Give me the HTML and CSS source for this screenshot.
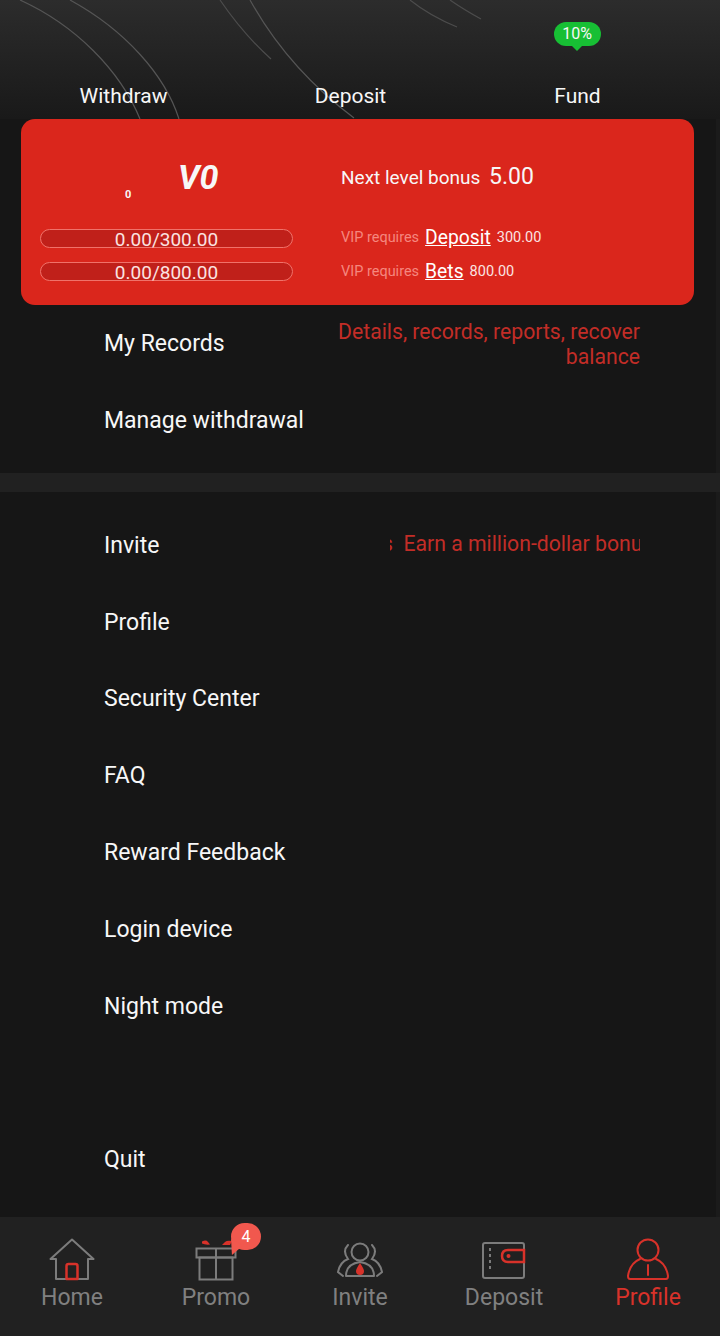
FILE: index.html
```html
<!DOCTYPE html>
<html>
  <head>
    <meta charset="utf-8">
    <title>Profile</title>
    <link rel="stylesheet" href="styles.css">
  </head>
  <body>
    <div class="page">
      <div class="top_bar">
        <svg class="top_lines" width="720" height="119" viewBox="0 0 720 119" fill="none" stroke-width="1.200">
          <path d="M20 0C75 25 120 70 140 119" stroke="#555"/>
          <path d="M70 0C125 30 165 75 179 119" stroke="#555"/>
          <path d="M220 0C235 22 252 42 271 59" stroke="#4c4c4c"/>
          <path d="M250 0C275 45 310 85 354 118" stroke="#555"/>
          <path d="M410 0C425 12 440 20 457 27" stroke="#4c4c4c"/>
          <path d="M450 0C460 7 470 13 481 19" stroke="#4c4c4c"/>
        </svg>
        <div class="top_item">Withdraw</div>
        <div class="top_item">Deposit</div>
        <div class="top_item">
          <span class="top_badge">10%</span>
          Fund
        </div>
      </div>

      <div class="vip_card">
        <div class="vip_left">
          <div class="vip_level">
            <span class="level_small">0</span>
            <span class="level_big">V0</span>
          </div>
          <div class="vip_bar">0.00/300.00</div>
          <div class="vip_bar">0.00/800.00</div>
        </div>
        <div class="vip_right">
          <div class="bonus_row">Next level bonus <span class="bonus_num">5.00</span></div>
          <div class="req_row"><span class="req_label">VIP requires</span><span class="req_link">Deposit</span><span>300.00</span></div>
          <div class="req_row"><span class="req_label">VIP requires</span><span class="req_link">Bets</span><span>800.00</span></div>
        </div>
      </div>

      <div class="menu menu_first">
        <div class="menu_row">
          <span>My Records</span>
          <span class="menu_note">Details, records, reports, recover balance</span>
        </div>
        <div class="menu_row"><span>Manage withdrawal</span></div>
      </div>

      <div class="menu_gap"></div>

      <div class="menu menu_second">
        <div class="menu_row">
          <span>Invite</span>
          <div class="marquee"><span class="marquee_text">s&nbsp;&nbsp;Earn a million-dollar bonus</span></div>
        </div>
        <div class="menu_row"><span>Profile</span></div>
        <div class="menu_row"><span>Security Center</span></div>
        <div class="menu_row"><span>FAQ</span></div>
        <div class="menu_row"><span>Reward Feedback</span></div>
        <div class="menu_row"><span>Login device</span></div>
        <div class="menu_row"><span>Night mode</span></div>
        <div class="menu_row"></div>
        <div class="menu_row"><span>Quit</span></div>
      </div>

      <div class="tabbar">
        <div class="tab">
          <svg class="tab_icon" width="48" height="44" viewBox="0 0 48 44" fill="none" stroke="#7c7c7c" stroke-width="2" stroke-linejoin="round" stroke-linecap="round">
            <path d="M2.5 21L24 1.5L45.5 21H40V41H8V21Z"/>
            <path d="M18.5 41V28Q18.5 26 20.500 26H27.500Q29.500 26 29.500 28V41H18.500Z" stroke="#d8322a" stroke-width="2.500"/>
          </svg>
          <span>Home</span>
        </div>
        <div class="tab">
          <span class="tab_badge">4</span>
          <svg class="tab_icon" width="48" height="44" viewBox="0 0 48 44" fill="none" stroke="#7c7c7c" stroke-width="2">
            <path d="M4.500 10.500H43.500V19.500H4.500Z"/>
            <path d="M7.500 19.500H40.500V41.500H7.500Z"/>
            <path d="M24 10.500V41.500"/>
            <path d="M10 3.500Q14 1.500 16 4L18 6.500Q13 7 10 5.500Z" fill="#d8322a" stroke="none"/>
            <path d="M40 3Q35 2 33 4L30 7H38Z" fill="#d8322a" stroke="none"/>
          </svg>
          <span>Promo</span>
        </div>
        <div class="tab">
          <svg class="tab_icon" width="48" height="44" viewBox="0 0 48 44" fill="none" stroke="#7c7c7c" stroke-width="2" stroke-linecap="round">
            <circle cx="24" cy="14" r="8.500"/>
            <path d="M10 38Q10 26 24 24Q38 26 38 38Z" stroke-linejoin="round"/>
            <path d="M12 7Q6 13 12 21Q4 24 2 34L7 38M36 7Q42 13 36 21Q44 24 46 34L41 38"/>
            <path d="M24 25Q28 31 28 33A4 4 0 0 1 20 33Q20 31 24 25Z" fill="#d8322a" stroke="none"/>
          </svg>
          <span>Invite</span>
        </div>
        <div class="tab">
          <svg class="tab_icon" width="48" height="44" viewBox="0 0 48 44" fill="none" stroke="#7c7c7c" stroke-width="2">
            <rect x="3" y="5" width="41" height="35" rx="2"/>
            <path d="M10 10V33" stroke-dasharray="3 3"/>
            <path d="M44 12H28Q22 12 22 18Q22 24 28 24H44Z" stroke="#d8322a" stroke-width="2.500" fill="#212121"/>
            <circle cx="28.500" cy="18" r="2" fill="#d8322a" stroke="none"/>
          </svg>
          <span>Deposit</span>
        </div>
        <div class="tab tab_on">
          <svg class="tab_icon" width="48" height="44" viewBox="0 0 48 44" fill="none" stroke="#d8322a" stroke-width="2" stroke-linecap="round" stroke-linejoin="round">
            <circle cx="24" cy="12" r="10.500"/>
            <path d="M16 21C9 24 5 31 4 38Q4 41 6 41H42Q44 41 44 38C43 31 39 24 32 21"/>
            <path d="M24 27V37"/>
          </svg>
          <span>Profile</span>
        </div>
      </div>
    </div>
  </body>
</html>
```
FILE: styles.css
```css
*{
  box-sizing: border-box;
}
body{
  margin: 0;
  background: #161616;
  font-family: Roboto, sans-serif;
  color: #f7f7f7;
}
.page{
  width: 720px;
  height: 1336px;
  display: flex;
  flex-direction: column;
  overflow: hidden;
  background: linear-gradient(to right, #161616 716px, #1b1b1b 716px);
}
.top_bar{
  position: relative;
  height: 119px;
  flex: none;
  display: grid;
  grid-template-columns: repeat(3, 227px);
  align-items: end;
  background: linear-gradient(#2c2c2c, #191919);
  font-size: 21px;
  padding: 0 0 10px 10px;
}
.top_lines{
  position: absolute;
  left: 0;
  top: 0;
}
.top_item{
  position: relative;
  text-align: center;
  line-height: 25px;
}
.top_badge{
  position: absolute;
  left: 50%;
  margin-left: -24px;
  top: -62px;
  width: 47px;
  height: 24px;
  border-radius: 12px;
  background: #17bf34;
  font-size: 16px;
  line-height: 24px;
  text-align: center;
}
.top_badge:after{
  content: '';
  position: absolute;
  left: 17px;
  top: 23px;
  border-left: 6px solid transparent;
  border-right: 6px solid transparent;
  border-top: 6px solid #17bf34;
}
.vip_card{
  flex: none;
  height: 186px;
  margin: 0 26px 0 21px;
  padding: 0 0 0 19px;
  display: flex;
  background: #da261c;
  border-radius: 14px;
}
.vip_left{
  width: 253px;
  flex: none;
}
.vip_level{
  height: 110px;
  display: flex;
  align-items: center;
  padding-left: 85px;
}
.level_small{
  font-size: 11px;
  font-weight: 700;
  width: 22px;
  padding-top: 40px;
}
.level_big{
  font-size: 34px;
  font-weight: 700;
  font-style: italic;
  margin-left: 31px;
  padding-top: 5px;
}
.vip_bar{
  height: 19px;
  margin-bottom: 14px;
  border: 1px solid #f0726a;
  border-radius: 10px;
  background: #c0201a;
  text-align: center;
  font-size: 19px;
  line-height: 20px;
  color: #fbe3e1;
}
.vip_right{
  padding-left: 48px;
  flex: 1;
}
.bonus_row{
  height: 101px;
  padding-top: 43px;
  font-size: 19px;
  line-height: 30px;
}
.bonus_num{
  font-size: 23px;
  margin-left: 4px;
}
.req_row{
  height: 34px;
  display: flex;
  align-items: center;
  gap: 6px;
  font-size: 14.5px;
  color: #fbe3e1;
}
.req_label{
  color: #f5877f;
}
.req_link{
  font-size: 19.3px;
  color: #fff;
  text-decoration: underline;
}
.menu{
  flex: none;
  padding: 0 80px 0 104px;
  font-size: 23px;
}
.menu_first{
  height: 168px;
}
.menu_second{
  height: 725px;
  padding-top: 15px;
}
.menu_gap{
  flex: none;
  height: 19px;
  background: #212121;
}
.menu_row{
  height: 76.8px;
  display: flex;
  align-items: center;
  justify-content: space-between;
}
.menu_note{
  width: 305px;
  padding-top: 1px;
  text-align: right;
  font-size: 21.2px;
  line-height: 25px;
  color: #c22d27;
}
.marquee{
  width: 250px;
  overflow: hidden;
  white-space: nowrap;
  font-size: 21.2px;
  color: #c22d27;
  padding-bottom: 4px;
}
.marquee_text{
  display: inline-block;
  margin-left: -8px;
}
.tabbar{
  flex: none;
  height: 119px;
  display: grid;
  grid-template-columns: repeat(5, 1fr);
  background: #212121;
}
.tab{
  position: relative;
  display: flex;
  flex-direction: column;
  align-items: center;
  padding-top: 21px;
  font-size: 23px;
  line-height: 28px;
  color: #808080;
}
.tab_icon{
  display: block;
  margin-bottom: 2px;
}
.tab_on{
  color: #d8322a;
}
.tab_badge{
  position: absolute;
  left: 87px;
  top: 6px;
  width: 30px;
  height: 27px;
  border-radius: 15px;
  background: #f1584e;
  color: #fff;
  font-size: 16px;
  line-height: 27px;
  text-align: center;
}
.tab_badge:after{
  content: '';
  position: absolute;
  left: 0;
  top: 16px;
  width: 12px;
  height: 16px;
  background: #f1584e;
  clip-path: polygon(0 0, 100% 40%, 8% 100%);
}
```
